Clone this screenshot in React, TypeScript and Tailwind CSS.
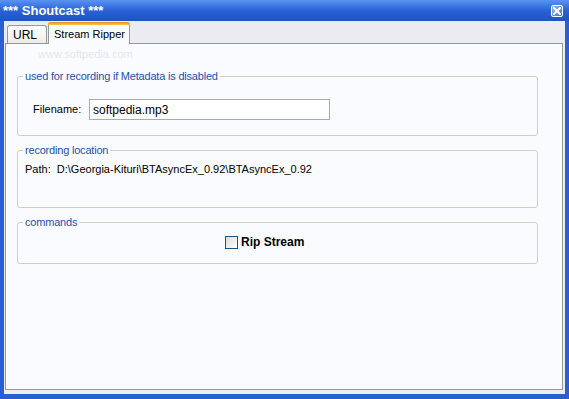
import React from "react";

const FONT = { fontFamily: '"Liberation Sans", Arial, sans-serif' };

const GroupBox: React.FC<{
  legend: string;
  className: string;
  children: React.ReactNode;
}> = ({ legend, className, children }) => (
  <fieldset
    className={`border border-[#d0d0bf] rounded-[3px] w-[521px] ${className}`}
  >
    <legend className="ml-[5px] px-[2px] text-[11px] leading-[13px] tracking-[-0.2px] text-[#1f4fb0]">
      {legend}
    </legend>
    {children}
  </fieldset>
);

export default function App() {
  return (
    <div
      className="w-[569px] h-[399px] flex flex-col bg-[#2a5fd2] overflow-hidden"
      style={FONT}
    >
      {/* title bar */}
      <div className="h-[21px] flex items-center justify-between pl-[3px] pr-[6px] bg-gradient-to-b from-[#5a93f0] via-[#2a62d8] to-[#1f52c4]">
        <span className="text-white font-bold text-[13px] leading-none">
          *** Shoutcast ***
        </span>
        <button className="w-[12px] h-[12px] mt-[1px] border border-white rounded-[2px] bg-gradient-to-br from-[#8fb0ee] to-[#4a74d4] flex items-center justify-center">
          <svg width="8" height="8" viewBox="0 0 8 8">
            <path
              d="M1 1 L7 7 M7 1 L1 7"
              stroke="white"
              strokeWidth="2"
              strokeLinecap="square"
            />
          </svg>
        </button>
      </div>

      {/* window body */}
      <div className="flex-1 mx-[4px] mb-[5px] bg-[#ecebf1] flex flex-col pl-[1px] pr-[2px] pb-[4px] relative">
        <div className="absolute left-[34px] top-[25px] text-[11px] text-[#e6e6ec]">
          www.softpedia.com
        </div>

        {/* tabs */}
        <div className="h-[22px] flex items-end pl-[2px] relative z-10">
          <div className="h-[18px] w-[40px] border border-b-0 border-[#919b9c] rounded-t-[3px] bg-gradient-to-b from-white to-[#ecebe6] flex items-center pl-[5px] text-[12px] text-black">
            URL
          </div>
          <div className="h-[22px] w-[82px] ml-[1px] -mb-[1px] border-x border-[#919b9c] rounded-t-[3px] bg-[#fafbfe] flex flex-col">
            <div className="h-[3px] rounded-t-[3px] bg-gradient-to-b from-[#e68b2c] to-[#ffc73c] -mx-[1px]" />
            <div className="flex-1 flex items-center pl-[5px] text-[11px] text-black">
              Stream Ripper
            </div>
          </div>
        </div>

        {/* tab panel */}
        <div className="flex-1 border border-[#919b9c] bg-[#fafbfe] pt-[26px] pl-[11px] flex flex-col">
          <GroupBox
            legend="used for recording if Metadata is disabled"
            className="h-[66px]"
          >
            <div className="flex items-center pt-[16px] pl-[15px]">
              <span className="text-[11px] text-black w-[56px]">Filename:</span>
              <div className="w-[241px] h-[21px] border border-[#a5acb2] bg-white flex items-center pl-[3px] text-[12px] text-black">
                softpedia.mp3
              </div>
            </div>
          </GroupBox>

          <GroupBox legend="recording location" className="h-[64px] mt-[8px]">
            <div className="pt-[6px] pl-[7px] text-[11px] leading-[13px] text-black whitespace-pre">
              {"Path:  D:\\Georgia-Kituri\\BTAsyncEx_0.92\\BTAsyncEx_0.92"}
            </div>
          </GroupBox>

          <GroupBox legend="commands" className="h-[48px] mt-[8px]">
            <div className="pt-[4px] pl-[207px] flex items-center gap-[3px]">
              <div className="w-[13px] h-[13px] border border-[#1c5180] bg-gradient-to-br from-[#dcdcd6] to-white" />
              <span className="text-[12px] font-bold text-black">Rip Stream</span>
            </div>
          </GroupBox>
        </div>
      </div>
    </div>
  );
}
